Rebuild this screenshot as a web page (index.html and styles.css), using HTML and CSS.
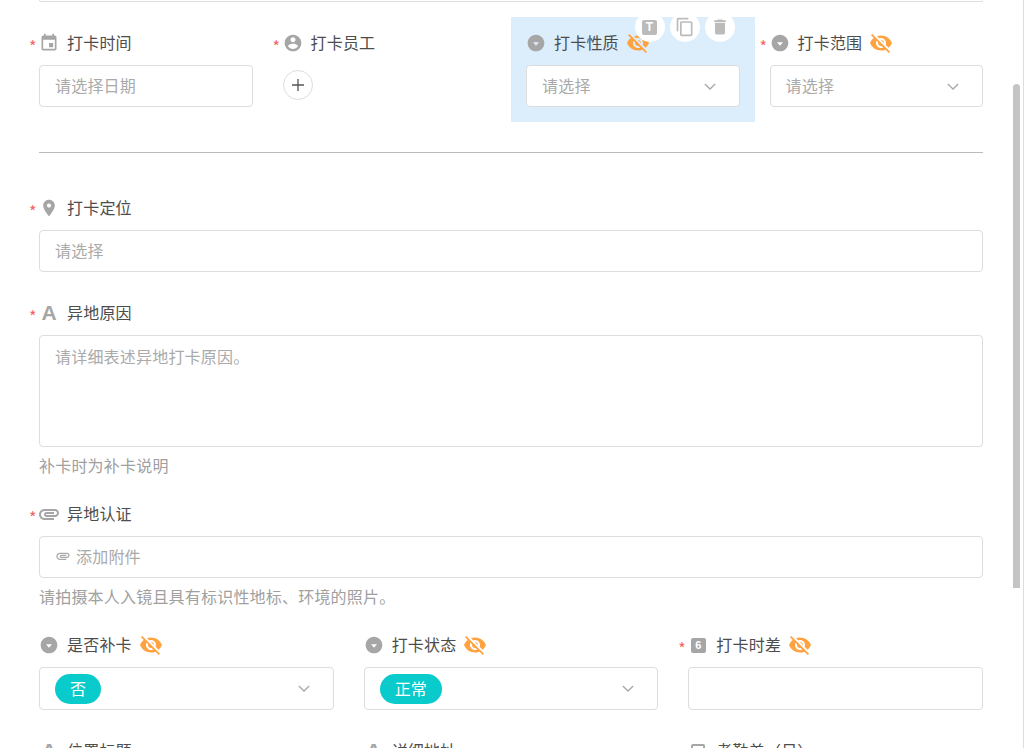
FILE: index.html
```html
<!DOCTYPE html>
<html>
    <head>
        <title>打卡表单</title>
        <link rel="stylesheet" href="styles.css">
    </head>
    <body>
        <svg class="defs" width="0" height="0">
            <symbol id="i-event" viewBox="0 0 24 24"><path d="M17 12h-5v5h5v-5zM16 1v2H8V1H6v2H5c-1.11 0-1.99.9-1.99 2L3 19c0 1.1.89 2 2 2h14c1.1 0 2-.9 2-2V5c0-1.1-.9-2-2-2h-1V1h-2zm3 18H5V8h14v11z"/></symbol>
            <symbol id="i-user" viewBox="0 0 24 24"><path d="M12 2C6.48 2 2 6.48 2 12s4.48 10 10 10 10-4.48 10-10S17.52 2 12 2zm0 3c1.66 0 3 1.34 3 3s-1.34 3-3 3-3-1.34-3-3 1.34-3 3-3zm0 14.2c-2.5 0-4.71-1.28-6-3.22.03-1.99 4-3.08 6-3.08 1.99 0 5.97 1.09 6 3.08-1.29 1.94-3.5 3.22-6 3.22z"/></symbol>
            <symbol id="i-drop" viewBox="0 0 24 24"><path d="M12 2C6.48 2 2 6.48 2 12s4.48 10 10 10 10-4.48 10-10S17.52 2 12 2zm0 13.2L8.4 11h7.2L12 15.2z"/></symbol>
            <symbol id="i-place" viewBox="0 0 24 24"><path d="M12 2C8.13 2 5 5.13 5 9c0 5.25 7 13 7 13s7-7.75 7-13c0-3.87-3.13-7-7-7zm0 9.5c-1.38 0-2.5-1.12-2.5-2.5s1.12-2.5 2.5-2.5 2.5 1.12 2.5 2.5-1.12 2.5-2.5 2.5z"/></symbol>
            <symbol id="i-clip" viewBox="0 0 24 24"><path d="M2 12.5C2 9.46 4.46 7 7.5 7H18c2.21 0 4 1.79 4 4s-1.79 4-4 4H9.5C8.12 15 7 13.88 7 12.5S8.12 10 9.5 10H17v2H9.41c-.55 0-.55 1 0 1H18c1.1 0 2-.9 2-2s-.9-2-2-2H7.5C5.57 9 4 10.57 4 12.5S5.57 16 7.5 16H17v2H7.5C4.46 18 2 15.54 2 12.5z"/></symbol>
            <symbol id="i-eye-off" viewBox="0 0 24 24"><path d="M12 7c2.76 0 5 2.24 5 5 0 .65-.13 1.26-.36 1.83l2.92 2.92c1.51-1.26 2.7-2.89 3.43-4.75-1.73-4.39-6-7.5-11-7.5-1.4 0-2.74.25-3.98.7l2.16 2.16C10.74 7.13 11.35 7 12 7zM2 4.27l2.28 2.28.46.46C3.08 8.3 1.78 10.02 1 12c1.73 4.39 6 7.5 11 7.5 1.55 0 3.03-.3 4.38-.84l.42.42L19.73 22 21 20.73 3.27 3 2 4.27zM7.53 9.8l1.55 1.55c-.05.21-.08.43-.08.65 0 1.66 1.34 3 3 3 .22 0 .44-.03.65-.08l1.55 1.55c-.67.33-1.41.53-2.2.53-2.76 0-5-2.24-5-5 0-.79.2-1.53.53-2.2zm4.31-.78l3.15 3.15.02-.16c0-1.66-1.34-3-3-3l-.17.01z"/></symbol>
            <symbol id="i-copy" viewBox="0 0 24 24"><path d="M16 1H4c-1.1 0-2 .9-2 2v14h2V3h12V1zm3 4H8c-1.1 0-2 .9-2 2v14c0 1.1.9 2 2 2h11c1.1 0 2-.9 2-2V7c0-1.1-.9-2-2-2zm0 16H8V7h11v14z"/></symbol>
            <symbol id="i-trash" viewBox="0 0 24 24"><path d="M6 19c0 1.1.9 2 2 2h8c1.1 0 2-.9 2-2V7H6v12zM19 4h-3.5l-1-1h-5l-1 1H5v2h14V4z"/></symbol>
            <symbol id="i-down" viewBox="0 0 14 8"><path d="M1 1l6 6 6-6" fill="none" stroke="currentColor" stroke-width="1.5"/></symbol>
        </svg>

        <div class="page">
            <div class="form">
                <div class="stub"></div>

                <div class="row cols-4">
                    <div class="field">
                        <div class="label"><span class="req">*</span><svg class="icon"><use href="#i-event"/></svg><span class="name">打卡时间</span></div>
                        <div class="box placeholder">请选择日期</div>
                    </div>
                    <div class="field">
                        <div class="label"><span class="req">*</span><svg class="icon"><use href="#i-user"/></svg><span class="name">打卡员工</span></div>
                        <div class="add">
                            <svg width="12" height="12" viewBox="0 0 12 12"><path d="M6 0v12M0 6h12" stroke="#555" stroke-width="1.3"/></svg>
                        </div>
                    </div>
                    <div class="field selected">
                        <div class="tools">
                            <div class="tool"><span class="t-icon">T</span></div>
                            <div class="tool"><svg class="icon tool-icon"><use href="#i-copy"/></svg></div>
                            <div class="tool"><svg class="icon tool-icon"><use href="#i-trash"/></svg></div>
                        </div>
                        <div class="label"><svg class="icon"><use href="#i-drop"/></svg><span class="name">打卡性质</span><svg class="eye"><use href="#i-eye-off"/></svg></div>
                        <div class="box placeholder select">请选择<svg class="chevron"><use href="#i-down"/></svg></div>
                    </div>
                    <div class="field">
                        <div class="label"><span class="req">*</span><svg class="icon"><use href="#i-drop"/></svg><span class="name">打卡范围</span><svg class="eye"><use href="#i-eye-off"/></svg></div>
                        <div class="box placeholder select">请选择<svg class="chevron"><use href="#i-down"/></svg></div>
                    </div>
                </div>

                <div class="divider"></div>

                <div class="field">
                    <div class="label"><span class="req">*</span><svg class="icon"><use href="#i-place"/></svg><span class="name">打卡定位</span></div>
                    <div class="box placeholder">请选择</div>
                </div>

                <div class="field has-hint">
                    <div class="label"><span class="req">*</span><span class="icon a-icon">A</span><span class="name">异地原因</span></div>
                    <div class="box area placeholder">请详细表述异地打卡原因。</div>
                    <div class="hint">补卡时为补卡说明</div>
                </div>

                <div class="field has-hint">
                    <div class="label"><span class="req">*</span><svg class="icon clip"><use href="#i-clip"/></svg><span class="name">异地认证</span></div>
                    <div class="box placeholder"><svg class="clip-small"><use href="#i-clip"/></svg>添加附件</div>
                    <div class="hint">请拍摄本人入镜且具有标识性地标、环境的照片。</div>
                </div>

                <div class="row cols-3">
                    <div class="field">
                        <div class="label"><svg class="icon"><use href="#i-drop"/></svg><span class="name">是否补卡</span><svg class="eye"><use href="#i-eye-off"/></svg></div>
                        <div class="box select tall"><span class="tag">否</span><svg class="chevron"><use href="#i-down"/></svg></div>
                    </div>
                    <div class="field">
                        <div class="label"><svg class="icon"><use href="#i-drop"/></svg><span class="name">打卡状态</span><svg class="eye"><use href="#i-eye-off"/></svg></div>
                        <div class="box select tall"><span class="tag">正常</span><svg class="chevron"><use href="#i-down"/></svg></div>
                    </div>
                    <div class="field">
                        <div class="label"><span class="req">*</span><span class="icon-slot"><span class="n-icon">6</span></span><span class="name">打卡时差</span><svg class="eye"><use href="#i-eye-off"/></svg></div>
                        <div class="box tall"></div>
                    </div>
                </div>

                <div class="row cols-3">
                    <div class="field">
                        <div class="label"><span class="icon a-icon">A</span><span class="name">位置标题</span></div>
                    </div>
                    <div class="field">
                        <div class="label"><span class="icon a-icon">A</span><span class="name">详细地址</span></div>
                    </div>
                    <div class="field">
                        <div class="label"><span class="icon-slot"><span class="o-icon"></span></span><span class="name">考勤差（日）</span></div>
                    </div>
                </div>
            </div>
            <div class="thumb"></div>
        </div>
    </body>
</html>
```

FILE: styles.css
```css
html, body {
    margin: 0;
    height: 748px;
    overflow: hidden;
    background-color: #fff;
}
body {
    font-family: "Noto Sans CJK SC", "Liberation Sans", sans-serif;
    font-size: 16px;
    letter-spacing: 0.2px;
    color: #4d4d4d;
}
.defs {
    display: block;
    height: 0;
}
.page {
    position: relative;
    box-sizing: border-box;
    width: 1024px;
    height: 748px;
    overflow: hidden;
    border-right: 1px solid #ddd;
}
.form {
    width: 974px;
    margin-left: 24px;
}
.stub {
    box-sizing: border-box;
    height: 2px;
    margin: 0 15px 15px;
    border: 1px solid #ddd;
    border-top: 0;
    border-radius: 0 0 4px 4px;
}
.row {
    display: grid;
}
.cols-4 {
    grid-template-columns: repeat(4, 1fr);
}
.cols-3 {
    grid-template-columns: repeat(3, 1fr);
}
.divider {
    height: 1px;
    margin: 30px 15px 29px;
    background-color: #bbb;
}
.field {
    position: relative;
    padding: 15px;
}
.has-hint {
    padding-bottom: 11px;
}
.selected {
    background-color: #dcedfc;
}
.label {
    display: flex;
    align-items: center;
    height: 22px;
    margin-bottom: 11px;
    line-height: 22px;
    white-space: nowrap;
}
.name {
    padding-bottom: 2px;
}
.req {
    width: 10px;
    margin-left: -10px;
    color: #f56262;
    font-size: 16px;
    padding-top: 6px;
}
.icon, .icon-slot {
    display: block;
    flex: none;
    width: 20px;
    height: 20px;
    margin-right: 8px;
    fill: #a6a6a6;
}
.clip {
    width: 24px;
    height: 24px;
    margin: 0 6px 0 -2px;
}
.a-icon {
    font-family: "Liberation Sans", sans-serif;
    font-weight: bold;
    font-size: 21px;
    line-height: 20px;
    letter-spacing: 0;
    text-align: center;
    color: #a6a6a6;
}
.icon-slot {
    display: flex;
    align-items: center;
    justify-content: center;
}
.n-icon {
    width: 15px;
    height: 15px;
    border-radius: 2px;
    background-color: #a6a6a6;
    color: #fff;
    font-family: "Liberation Sans", sans-serif;
    font-weight: bold;
    font-size: 11px;
    line-height: 15px;
    text-align: center;
}
.o-icon {
    box-sizing: border-box;
    width: 14px;
    height: 14px;
    border: 2px solid #a6a6a6;
    border-radius: 2px;
}
.eye {
    flex: none;
    width: 24px;
    height: 24px;
    margin-left: 7px;
    fill: #ffa23f;
}
.box {
    display: flex;
    align-items: center;
    box-sizing: border-box;
    height: 42px;
    padding: 0 15px;
    border: 1px solid #ddd;
    border-radius: 4px;
    background-color: #fff;
}
.tall {
    height: 43px;
}
.area {
    align-items: flex-start;
    height: 112px;
    padding-top: 9px;
    line-height: 22px;
}
.placeholder {
    padding-bottom: 2px;
    color: #aaa;
}
.select {
    justify-content: space-between;
}
.chevron {
    width: 12px;
    height: 7px;
    margin-right: 8px;
    color: #a8a8a8;
}
.placeholder .chevron {
    margin-top: 2px;
}
.clip-small {
    width: 16px;
    height: 16px;
    margin-right: 5px;
    fill: #aaa;
}
.hint {
    margin-top: 7px;
    margin-bottom: 1px;
    line-height: 22px;
    color: #a0a0a0;
}
.tag {
    height: 30px;
    padding: 0 15px;
    border-radius: 15px;
    background-color: #0acbcb;
    color: #fff;
    line-height: 28px;
}
.add {
    display: flex;
    align-items: center;
    justify-content: center;
    box-sizing: border-box;
    width: 30px;
    height: 30px;
    margin-top: 16px;
    margin-bottom: 7px;
    border: 1px solid #ddd;
    border-radius: 50%;
}
.tools {
    position: absolute;
    top: -5px;
    right: 20px;
    z-index: 1;
    display: flex;
    gap: 5px;
}
.tool {
    display: flex;
    align-items: center;
    justify-content: center;
    width: 30px;
    height: 30px;
    border-radius: 50%;
    background-color: #fff;
}
.tool-icon {
    margin: 0;
    fill: #bbb;
}
.t-icon {
    width: 15px;
    height: 15px;
    border-radius: 2px;
    background-color: #bbb;
    color: #fff;
    font-family: "Liberation Sans", sans-serif;
    font-weight: bold;
    font-size: 12px;
    line-height: 15px;
    letter-spacing: 0;
    text-align: center;
}
.thumb {
    position: absolute;
    top: 84px;
    left: 1013px;
    width: 7px;
    height: 504px;
    border-radius: 4px 4px 0 0;
    background-color: #c4c4c4;
}
```
